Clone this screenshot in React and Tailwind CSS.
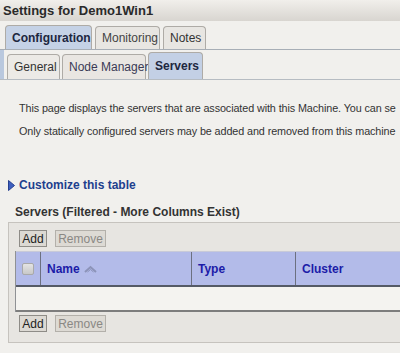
export default function App() {
  const tab = "rounded-t-[4px] border border-b-0 border-[#aeaba6] px-[6px] flex items-center text-[12px] leading-none";
  return (
    <div className="w-[400px] h-[353px] overflow-hidden bg-[#f1f0ed] text-[#222] whitespace-nowrap" style={{ fontFamily: "Tahoma, 'Liberation Sans', sans-serif" }}>
      {/* title bar */}
      <div className="h-[21px] bg-gradient-to-b from-[#f1efeb] to-[#d8d5d0] pl-[3px] flex items-center text-[13px] font-bold text-[#2a2a2a]">
        Settings for Demo1Win1
      </div>

      {/* top tabs */}
      <div className="mt-[4px] h-[25px] flex items-end gap-[3px] pl-[5px] border-b border-[#a7aeb6]">
        <div className={`${tab} h-[24px] w-[87px] bg-[#c5d2e6] font-bold text-[#1d2740]`}>Configuration</div>
        <div className={`${tab} h-[23px] w-[65px] bg-[#e8e6e2] text-[#444]`}>Monitoring</div>
        <div className={`${tab} h-[23px] w-[43px] bg-[#e8e6e2] text-[#333]`}>Notes</div>
      </div>

      {/* sub tabs */}
      <div className="h-[30px] flex items-end border-b border-[#b6bcc2]">
        <div className="w-[4px] h-full bg-[#b9c8de]" />
        <div className="flex items-end gap-[2px] pl-[3px]">
          <div className={`${tab} h-[25px] w-[53px] bg-[#eceae6] text-[#333]`}>General</div>
          <div className={`${tab} h-[25px] w-[84px] bg-[#e9e6e2] text-[#3a3a55]`}>Node Manager</div>
          <div className={`${tab} h-[27px] w-[55px] bg-[#c3d0e5] font-bold text-[#1d2740]`}>Servers</div>
        </div>
      </div>

      {/* description */}
      <div className="pl-[19px] text-[10.8px] tracking-[-0.1px] text-[#333] leading-[14px] overflow-hidden">
        <p className="mt-[21px]">This page displays the servers that are associated with this Machine. You can se</p>
        <p className="mt-[9px]">Only statically configured servers may be added and removed from this machine</p>
      </div>

      {/* customize */}
      <div className="mt-[39px] pl-[8px] flex items-center gap-[4px] h-[16px]">
        <svg width="7" height="11" viewBox="0 0 7 11">
          <path d="M0.5 0.5 L6.5 5.5 L0.5 10.5 Z" fill="#3d5fc0" stroke="#27408f" strokeWidth="1" />
        </svg>
        <span className="text-[12px] font-bold text-[#1e3f8e]">Customize this table</span>
      </div>

      {/* servers heading */}
      <div className="mt-[11px] pl-[15px] h-[16px] flex items-center text-[12px] font-bold text-[#333]">
        Servers (Filtered - More Columns Exist)
      </div>

      {/* panel */}
      <div className="mt-[2px] ml-[8px] w-[420px] border border-[#c6c3be] bg-[#e7e5e1] pt-[7px] pb-[10px] pl-[6px]">
        <div className="flex gap-[8px] pl-[4px]">
          <button className="h-[17px] w-[28px] border border-[#8e8c87] bg-[#dcd9d3] text-[12px] text-[#222] leading-none">Add</button>
          <button className="h-[17px] w-[51px] border border-[#b3b0aa] bg-[#dddad4] text-[12px] text-[#8a8884] leading-none">Remove</button>
        </div>

        <div className="mt-[4px] border-l border-[#8f9194]">
          <div className="h-[36px] flex bg-[#b3bbe9] border-t border-[#c8cad8] border-b-2 border-b-[#555a66]">
            <div className="w-[25px] flex items-center justify-center border-r border-[#6c7080]">
              <div className="w-[12px] h-[12px] rounded-[2px] border border-[#a9a9a9] bg-gradient-to-b from-[#e4e4e4] to-[#c8c8c8]" />
            </div>
            <div className="w-[151px] flex items-center gap-[4px] pl-[6px] border-r border-[#6c7080] text-[12px] font-bold text-[#1c1ca8]">
              Name
              <svg width="13" height="8" viewBox="0 0 13 8">
                <path d="M1 7 L6.5 2 L12 7" fill="none" stroke="#8c93b8" strokeWidth="2" />
                <path d="M3.5 7 L6.5 4.5 L9.5 7" fill="none" stroke="#8c93b8" strokeWidth="1" />
              </svg>
            </div>
            <div className="w-[104px] flex items-center pl-[6px] border-r border-[#6c7080] text-[12px] font-bold text-[#1c1ca8]">Type</div>
            <div className="flex-1 flex items-center pl-[6px] text-[12px] font-bold text-[#1c1ca8]">Cluster</div>
          </div>
          <div className="h-[25px] bg-[#f4f3f0] border-b-2 border-[#7d7d7d]" />
        </div>

        <div className="mt-[3px] flex gap-[8px] pl-[4px]">
          <button className="h-[17px] w-[28px] border border-[#8e8c87] bg-[#dcd9d3] text-[12px] text-[#222] leading-none">Add</button>
          <button className="h-[17px] w-[51px] border border-[#b3b0aa] bg-[#dddad4] text-[12px] text-[#8a8884] leading-none">Remove</button>
        </div>
      </div>
    </div>
  );
}
